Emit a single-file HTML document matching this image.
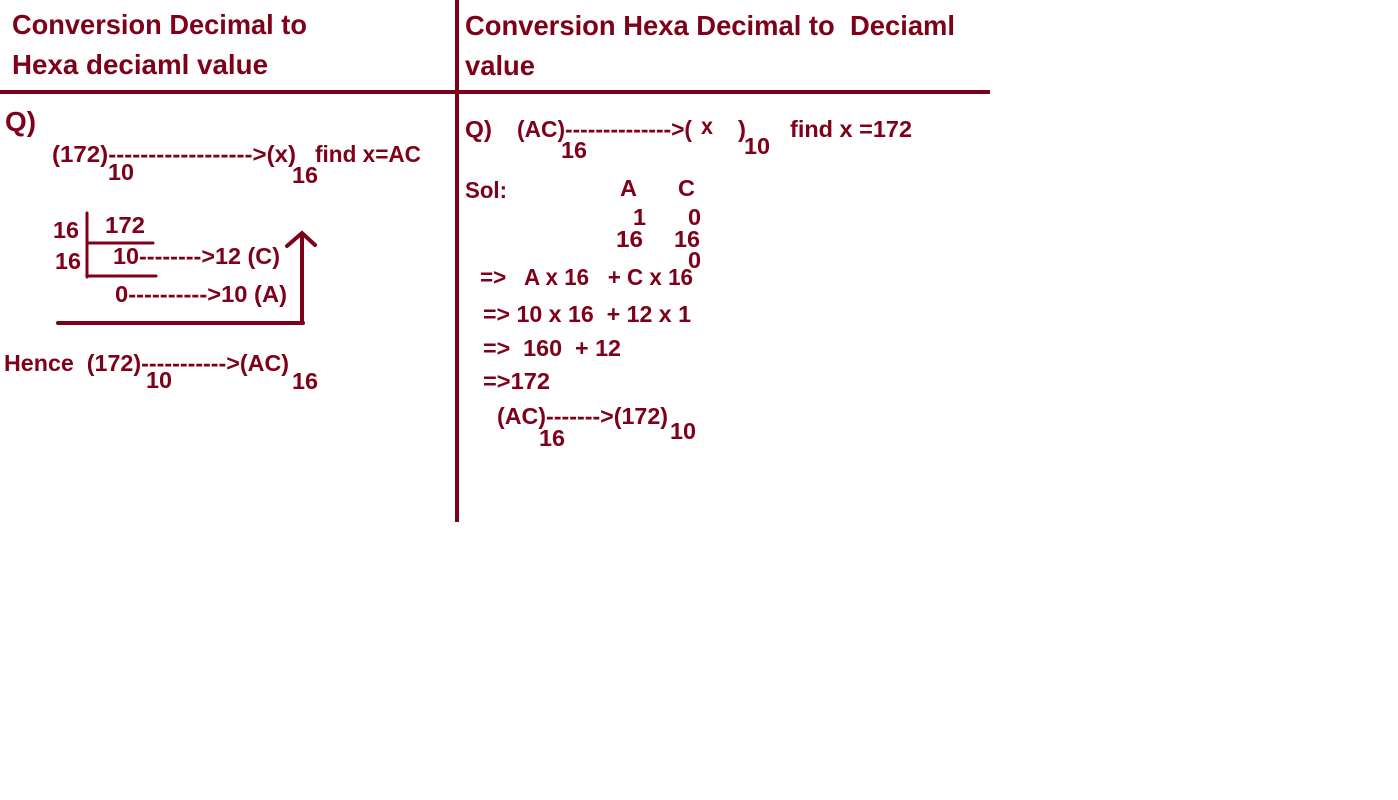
<!DOCTYPE html>
<html><head><meta charset="utf-8"><style>
html,body{margin:0;padding:0;background:#fff;width:1398px;height:800px;overflow:hidden}
svg text{font-family:"Liberation Sans",sans-serif;font-weight:bold;fill:#7f0019}
</style></head><body>
<svg width="1398" height="800" xmlns="http://www.w3.org/2000/svg">
<g fill="#7f0019" stroke="none">
<rect x="0" y="90" width="990" height="4"/>
<rect x="455" y="0" width="4" height="522"/>
</g>
<g stroke="#7f0019" fill="none" stroke-linecap="round">
<line x1="87" y1="213" x2="87" y2="277" stroke-width="3"/>
<line x1="87" y1="243" x2="153" y2="243" stroke-width="3"/>
<line x1="87" y1="276" x2="156" y2="276" stroke-width="3"/>
<line x1="58" y1="323" x2="303" y2="323" stroke-width="4"/>
<line x1="302" y1="235" x2="302" y2="323" stroke-width="4"/>
<polyline points="287,246 302,233 315,245" stroke-width="4"/>
</g>
<g font-size="28">
<text x="12" y="34" textLength="295" lengthAdjust="spacingAndGlyphs">Conversion Decimal to</text>
<text x="12" y="74" textLength="256" lengthAdjust="spacingAndGlyphs">Hexa deciaml value</text>
<text x="465" y="35" textLength="490" lengthAdjust="spacingAndGlyphs" xml:space="preserve">Conversion Hexa Decimal to  Deciaml</text>
<text x="465" y="75" textLength="70" lengthAdjust="spacingAndGlyphs">value</text>
<text x="5" y="131" textLength="31" lengthAdjust="spacingAndGlyphs">Q)</text>
</g>
<g font-size="23.5">
<text x="52" y="162" textLength="244" lengthAdjust="spacingAndGlyphs">(172)------------------&gt;(x)</text>
<text x="108" y="180" textLength="26" lengthAdjust="spacingAndGlyphs">10</text>
<text x="292" y="183" textLength="26" lengthAdjust="spacingAndGlyphs">16</text>
<text x="315" y="162" textLength="106" lengthAdjust="spacingAndGlyphs">find x=AC</text>
<text x="53" y="238" textLength="26" lengthAdjust="spacingAndGlyphs">16</text>
<text x="105" y="233" textLength="40" lengthAdjust="spacingAndGlyphs">172</text>
<text x="55" y="269" textLength="26" lengthAdjust="spacingAndGlyphs">16</text>
<text x="113" y="264" textLength="167" lengthAdjust="spacingAndGlyphs">10--------&gt;12 (C)</text>
<text x="115" y="302" textLength="172" lengthAdjust="spacingAndGlyphs">0----------&gt;10 (A)</text>
<text x="4" y="371" textLength="285" lengthAdjust="spacingAndGlyphs" xml:space="preserve">Hence  (172)-----------&gt;(AC)</text>
<text x="146" y="388" textLength="26" lengthAdjust="spacingAndGlyphs">10</text>
<text x="292" y="389" textLength="26" lengthAdjust="spacingAndGlyphs">16</text>

<text x="465" y="137" textLength="27" lengthAdjust="spacingAndGlyphs">Q)</text>
<text x="517" y="137" textLength="175" lengthAdjust="spacingAndGlyphs">(AC)--------------&gt;(</text>
<text x="701" y="134" textLength="12" lengthAdjust="spacingAndGlyphs">x</text>
<text x="738" y="137" textLength="8" lengthAdjust="spacingAndGlyphs">)</text>
<text x="561" y="158" textLength="26" lengthAdjust="spacingAndGlyphs">16</text>
<text x="744" y="154" textLength="26" lengthAdjust="spacingAndGlyphs">10</text>
<text x="790" y="137" textLength="122" lengthAdjust="spacingAndGlyphs">find x =172</text>
<text x="465" y="198" textLength="42" lengthAdjust="spacingAndGlyphs">Sol:</text>
<text x="620" y="196">A</text>
<text x="678" y="196">C</text>
<text x="633" y="225">1</text>
<text x="688" y="225">0</text>
<text x="616" y="247" textLength="27" lengthAdjust="spacingAndGlyphs">16</text>
<text x="674" y="247" textLength="26" lengthAdjust="spacingAndGlyphs">16</text>
<text x="688" y="268">0</text>
<text x="480" y="285" textLength="213" lengthAdjust="spacingAndGlyphs" xml:space="preserve">=&gt;   A x 16   + C x 16</text>
<text x="483" y="322" textLength="208" lengthAdjust="spacingAndGlyphs" xml:space="preserve">=&gt; 10 x 16  + 12 x 1</text>
<text x="483" y="356" textLength="138" lengthAdjust="spacingAndGlyphs" xml:space="preserve">=&gt;  160  + 12</text>
<text x="483" y="389" textLength="67" lengthAdjust="spacingAndGlyphs">=&gt;172</text>
<text x="497" y="424" textLength="171" lengthAdjust="spacingAndGlyphs">(AC)-------&gt;(172)</text>
<text x="539" y="446" textLength="26" lengthAdjust="spacingAndGlyphs">16</text>
<text x="670" y="439" textLength="26" lengthAdjust="spacingAndGlyphs">10</text>
</g>
</svg>
</body></html>
